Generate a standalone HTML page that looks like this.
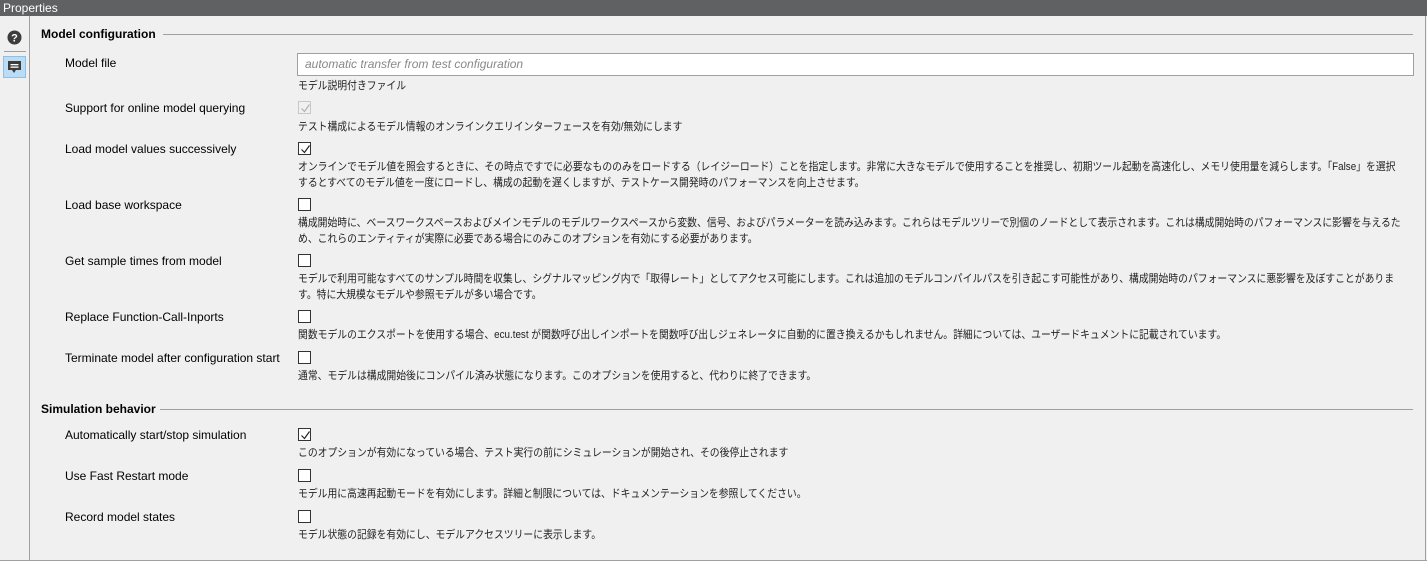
<!DOCTYPE html>
<html><head><meta charset="utf-8"><style>
*{margin:0;padding:0;box-sizing:border-box}
body{width:1427px;height:561px;background:#f0f0f0;position:relative;overflow:hidden;font-family:"Liberation Sans","Noto Sans CJK JP",sans-serif;font-size:12px;color:#000}
.t{position:absolute;white-space:nowrap}
#bar{position:absolute;left:0;top:0;width:1427px;height:16px;background:#5f6163;color:#fff;font-size:12px;line-height:16px;padding-left:3px}
#side{position:absolute;left:0;top:16px;width:30px;height:545px;border-right:1px solid #a0a0a0}
#rb{position:absolute;left:1425px;top:16px;width:1px;height:545px;background:#a0a0a0}
#bb{position:absolute;left:0;top:560px;width:1427px;height:1px;background:#a0a0a0}
.h{font-weight:bold;font-size:12px}
.line{position:absolute;height:1px;background:#a0a0a0}
.lab{left:65px}
.d{left:298px;font-size:11px;color:#222;line-height:16px;transform:scaleX(0.893);transform-origin:0 0}
.cb{position:absolute;left:298px;width:13px;height:13px;border:1px solid #333;background:#fff}
.cb svg{position:absolute;left:1px;top:1px}
</style></head><body>
<div id="bar">Properties</div>
<div id="side">
<svg style="position:absolute;left:7px;top:14px" width="15" height="15" viewBox="0 0 15 15"><circle cx="7.5" cy="7.5" r="7" fill="#3c3c3c"/><text x="7.5" y="11.5" text-anchor="middle" font-family="Liberation Sans" font-weight="bold" font-size="11" fill="#fff">?</text></svg>
<div style="position:absolute;left:4px;top:35px;width:22px;height:1px;background:#a0a0a0"></div>
<div style="position:absolute;left:3px;top:40px;width:23px;height:22px;background:#bcdcf4;border:1px solid #8cc0e8"></div>
<svg style="position:absolute;left:7px;top:44px" width="15" height="15" viewBox="0 0 15 15"><path d="M1 1h13v9H9l-2 3-2-3H1z" fill="#3c3c3c"/><rect x="3.5" y="4" width="8" height="1.3" fill="#fff"/><rect x="3.5" y="6.5" width="8" height="1.3" fill="#fff"/></svg>
</div>
<div id="rb"></div><div id="bb"></div>

<div class="t h" style="left:41px;top:27px">Model configuration</div>
<div class="line" style="left:163px;top:34px;width:1250px"></div>
<div class="t lab" style="top:56px">Model file</div>
<div style="position:absolute;left:297px;top:53px;width:1117px;height:23px;background:#fff;border:1px solid #a0a0a0"></div>
<div class="t" style="left:305px;top:57px;font-style:italic;color:#888">automatic transfer from test configuration</div>
<div class="t d" style="top:78px">モデル説明付きファイル</div>

<div class="t lab" style="top:101px">Support for online model querying</div>
<div class="cb" style="top:101px;border-color:#c8c8c8;background:#f0f0f0"><svg width="11" height="11"><path d="M1.5 5.5l3 3 5-7" stroke="#b0b0b0" fill="none" stroke-width="1.2"/></svg></div>
<div class="t d" style="top:119px">テスト構成によるモデル情報のオンラインクエリインターフェースを有効/無効にします</div>

<div class="t lab" style="top:142px">Load model values successively</div>
<div class="cb" style="top:142px"><svg width="11" height="11"><path d="M1.5 5.5l3 3 5-7" stroke="#222" fill="none" stroke-width="1.2"/></svg></div>
<div class="t d" style="top:159px">オンラインでモデル値を照会するときに、その時点ですでに必要なもののみをロードする（レイジーロード）ことを指定します。非常に大きなモデルで使用することを推奨し、初期ツール起動を高速化し、メモリ使用量を減らします。「False」を選択<br>するとすべてのモデル値を一度にロードし、構成の起動を遅くしますが、テストケース開発時のパフォーマンスを向上させます。</div>

<div class="t lab" style="top:198px">Load base workspace</div>
<div class="cb" style="top:198px"></div>
<div class="t d" style="top:215px">構成開始時に、ベースワークスペースおよびメインモデルのモデルワークスペースから変数、信号、およびパラメーターを読み込みます。これらはモデルツリーで別個のノードとして表示されます。これは構成開始時のパフォーマンスに影響を与えるた<br>め、これらのエンティティが実際に必要である場合にのみこのオプションを有効にする必要があります。</div>

<div class="t lab" style="top:254px">Get sample times from model</div>
<div class="cb" style="top:254px"></div>
<div class="t d" style="top:271px">モデルで利用可能なすべてのサンプル時間を収集し、シグナルマッピング内で「取得レート」としてアクセス可能にします。これは追加のモデルコンパイルパスを引き起こす可能性があり、構成開始時のパフォーマンスに悪影響を及ぼすことがありま<br>す。特に大規模なモデルや参照モデルが多い場合です。</div>

<div class="t lab" style="top:310px">Replace Function-Call-Inports</div>
<div class="cb" style="top:310px"></div>
<div class="t d" style="top:327px">関数モデルのエクスポートを使用する場合、ecu.test が関数呼び出しインポートを関数呼び出しジェネレータに自動的に置き換えるかもしれません。詳細については、ユーザードキュメントに記載されています。</div>

<div class="t lab" style="top:351px">Terminate model after configuration start</div>
<div class="cb" style="top:351px"></div>
<div class="t d" style="top:368px">通常、モデルは構成開始後にコンパイル済み状態になります。このオプションを使用すると、代わりに終了できます。</div>

<div class="t h" style="left:41px;top:402px">Simulation behavior</div>
<div class="line" style="left:160px;top:409px;width:1253px"></div>

<div class="t lab" style="top:428px">Automatically start/stop simulation</div>
<div class="cb" style="top:428px"><svg width="11" height="11"><path d="M1.5 5.5l3 3 5-7" stroke="#222" fill="none" stroke-width="1.2"/></svg></div>
<div class="t d" style="top:445px">このオプションが有効になっている場合、テスト実行の前にシミュレーションが開始され、その後停止されます</div>

<div class="t lab" style="top:469px">Use Fast Restart mode</div>
<div class="cb" style="top:469px"></div>
<div class="t d" style="top:486px">モデル用に高速再起動モードを有効にします。詳細と制限については、ドキュメンテーションを参照してください。</div>

<div class="t lab" style="top:510px">Record model states</div>
<div class="cb" style="top:510px"></div>
<div class="t d" style="top:527px">モデル状態の記録を有効にし、モデルアクセスツリーに表示します。</div>
</body></html>
